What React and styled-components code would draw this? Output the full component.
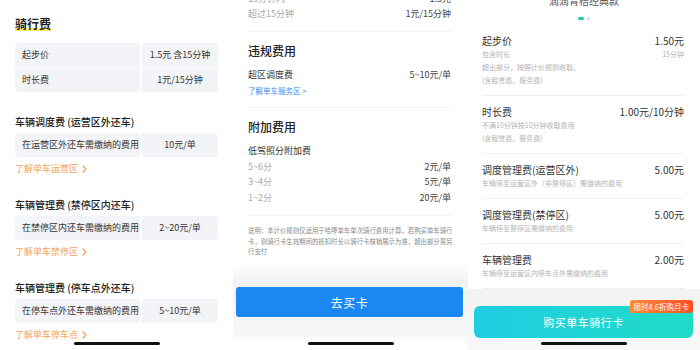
import React from "react";
import styled, { createGlobalStyle } from "styled-components";

const Global = createGlobalStyle`
  html, body { margin: 0; padding: 0; background: #fff; }
  body { font-family: "Noto Sans CJK SC", "Noto Sans", sans-serif; }
  * { box-sizing: border-box; }
`;

const Screen = styled.div`
  display: flex;
  width: 700px;
  height: 350px;
  overflow: hidden;
  background: #fff;
`;

const Panel = styled.div`
  position: relative;
  width: ${(p) => p.$w}px;
  flex: none;
  height: 350px;
  overflow: hidden;
  display: flex;
  flex-direction: column;
`;

const HomeBar = styled.div`
  position: absolute;
  left: 50%;
  bottom: 5px;
  width: 86px;
  height: 3px;
  margin-left: -43px;
  border-radius: 2px;
  background: #111;
`;

/* ---------- left panel ---------- */
const LeftBody = styled.div`
  padding: 0 15px;
`;

const MainTitle = styled.div`
  margin: 13px 0 10px;
  line-height: 18px;
  span {
    display: inline-block;
    font-size: 12px;
    font-weight: 700;
    color: #1f1f1f;
    background: linear-gradient(
      to bottom,
      transparent 13px,
      #fde862 13px,
      #fde862 16px,
      transparent 16px
    );
  }
`;

const FeeTable = styled.div`
  display: grid;
  grid-template-columns: 125px 1fr;
  gap: 1px 2px;
  border-radius: 4px;
  overflow: hidden;
`;

const Cell = styled.div`
  height: 24px;
  line-height: 24px;
  background: #f3f4f8;
  font-size: 9px;
  color: #333;
  padding-left: ${(p) => (p.$center ? 0 : 7)}px;
  text-align: ${(p) => (p.$center ? "center" : "left")};
  white-space: nowrap;
`;

const LeftSection = styled.div`
  margin-top: 23px;
`;

const SectionHead = styled.div`
  font-size: 10px;
  font-weight: 500;
  line-height: 14px;
  color: #222;
  margin-bottom: 4px;
  white-space: nowrap;
`;

const OrangeLink = styled.div`
  margin-top: 6px;
  display: flex;
  align-items: center;
  gap: 4px;
  font-size: 9px;
  line-height: 12px;
  color: #f5a25c;
`;

const Chevron = () => (
  <svg width="5" height="8" viewBox="0 0 5 8">
    <path d="M1 1l3 3-3 3" fill="none" stroke="#f5a25c" strokeWidth="1.4" strokeLinecap="round" strokeLinejoin="round" />
  </svg>
);

/* ---------- middle panel ---------- */
const MidBody = styled.div`
  padding: 0 17px 0 15px;
  margin-top: -9px;
`;

const MidSection = styled.div`
  padding: ${(p) => (p.$first ? "0 0 10px" : "11px 0 10px")};
  border-bottom: 1px solid #f1f1f1;
`;

const MidTitle = styled.div`
  font-size: 12px;
  font-weight: 500;
  line-height: 16px;
  color: #222;
  margin-bottom: 8px;
`;

const MidRow = styled.div`
  display: flex;
  justify-content: space-between;
  font-size: 9px;
  line-height: ${(p) => (p.$tall ? 15.5 : 15)}px;
  color: #444;
  span:first-child {
    color: ${(p) => (p.$muted ? "#a9a9a9" : "#333")};
  }
`;

const BlueLink = styled.div`
  margin-top: 3px;
  font-size: 7.5px;
  line-height: 12px;
  color: #3a8ef0;
`;

const Note = styled.div`
  padding-top: 10px;
  font-size: 6.4px;
  line-height: 10.5px;
  color: #8a8a8a;
  white-space: nowrap;
`;

const MidFooter = styled.div`
  margin-top: auto;
  height: 88px;
  padding: 25px 5px 0 3px;
  background: linear-gradient(
    to bottom,
    rgba(244, 244, 246, 0) 0,
    #f3f3f5 18px,
    #f6f6f8 72px,
    #ffffff 80px
  );
`;

const BlueButton = styled.div`
  height: 30px;
  border-radius: 3px;
  background: #1a88f3;
  color: #fff;
  font-size: 12px;
  display: flex;
  align-items: center;
  justify-content: center;
  letter-spacing: 0.5px;
`;

/* ---------- right panel ---------- */
const CardName = styled.div`
  margin-top: -6px;
  text-align: center;
  font-size: 10px;
  line-height: 14px;
  color: #555;
`;

const Dots = styled.div`
  display: flex;
  justify-content: center;
  align-items: center;
  gap: 3px;
  margin-top: 9px;
`;

const Dot = styled.div`
  width: ${(p) => (p.$active ? 6 : 3)}px;
  height: 3px;
  border-radius: 2px;
  background: ${(p) => (p.$active ? "#19cdb6" : "#dcdcdc")};
`;

const ItemList = styled.div`
  margin-top: 5px;
  padding: 0 16px 0 14px;
`;

const Item = styled.div`
  padding: 9px 0 8px;
  border-bottom: 1px solid #f0f0f0;
`;

const ItemHead = styled.div`
  display: flex;
  justify-content: space-between;
  font-size: 10px;
  line-height: 14px;
  color: #333;
`;

const SubRow = styled.div`
  display: flex;
  justify-content: space-between;
  font-size: 7px;
  line-height: 13px;
  color: #b3b3b3;
`;

const RightFooter = styled.div`
  margin-top: auto;
  height: 61px;
  padding: 17px 7px 0 6px;
  background: linear-gradient(to bottom, #f3f3f3 0, #f7f7f7 100%);
`;

const TealButton = styled.div`
  position: relative;
  height: 32px;
  border-radius: 6px;
  background: linear-gradient(90deg, #1fcde3 0%, #1fdcc6 100%);
  color: #fff;
  font-size: 11px;
  display: flex;
  align-items: center;
  justify-content: center;
  letter-spacing: 0.5px;
`;

const Badge = styled.div`
  position: absolute;
  top: -6px;
  right: 0;
  height: 13px;
  line-height: 13px;
  padding: 0 4px;
  border-radius: 3px 3px 3px 0;
  background: linear-gradient(90deg, #ff8a3a, #ff4e20);
  color: #fff;
  font-size: 7.5px;
  letter-spacing: 0;
  white-space: nowrap;
`;

const leftSections = [
  { head: "车辆调度费 (运营区外还车)", desc: "在运营区外还车需缴纳的费用", value: "10元/单", link: "了解单车运营区" },
  { head: "车辆管理费 (禁停区内还车)", desc: "在禁停区内还车需缴纳的费用", value: "2~20元/单", link: "了解单车禁停区" },
  { head: "车辆管理费 (停车点外还车)", desc: "在停车点外还车需缴纳的费用", value: "5~10元/单", link: "了解单车停车点" },
];

const rightItems = [
  {
    head: ["时长费", "1.00元/10分钟"],
    subs: [["不满10分钟按10分钟收取费用"], ["(含租赁费、服务费)"]],
  },
  { head: ["调度管理费(运营区外)", "5.00元"], subs: [["车辆停至运营区外（非禁停区）需缴纳的费用"]] },
  { head: ["调度管理费(禁停区)", "5.00元"], subs: [["车辆停至禁停区需缴纳的费用"]] },
  { head: ["车辆管理费", "2.00元"], subs: [["车辆停至运营区内停车点外需缴纳的费用"]] },
];

export default function App() {
  return (
    <>
      <Global />
      <Screen>
        <Panel $w={233}>
          <LeftBody>
            <MainTitle>
              <span>骑行费</span>
            </MainTitle>
            <FeeTable>
              <Cell>起步价</Cell>
              <Cell $center>1.5元 含15分钟</Cell>
              <Cell>时长费</Cell>
              <Cell $center>1元/15分钟</Cell>
            </FeeTable>
            {leftSections.map((s) => (
              <LeftSection key={s.head}>
                <SectionHead>{s.head}</SectionHead>
                <FeeTable>
                  <Cell>{s.desc}</Cell>
                  <Cell $center>{s.value}</Cell>
                </FeeTable>
                <OrangeLink>
                  {s.link}
                  <Chevron />
                </OrangeLink>
              </LeftSection>
            ))}
          </LeftBody>
          <HomeBar />
        </Panel>

        <Panel $w={235}>
          <MidBody>
            <MidSection $first>
              <MidRow $muted>
                <span>15分钟内</span>
                <span>1.5元</span>
              </MidRow>
              <MidRow $muted>
                <span>超过15分钟</span>
                <span>1元/15分钟</span>
              </MidRow>
            </MidSection>
            <MidSection>
              <MidTitle>违规费用</MidTitle>
              <MidRow>
                <span>超区调度费</span>
                <span>5~10元/单</span>
              </MidRow>
              <BlueLink>了解单车服务区 &gt;</BlueLink>
            </MidSection>
            <MidSection>
              <MidTitle>附加费用</MidTitle>
              <MidRow $tall>
                <span>低驾照分附加费</span>
              </MidRow>
              <MidRow $tall $muted>
                <span>5~6分</span>
                <span>2元/单</span>
              </MidRow>
              <MidRow $tall $muted>
                <span>3~4分</span>
                <span>5元/单</span>
              </MidRow>
              <MidRow $tall $muted>
                <span>1~2分</span>
                <span>20元/单</span>
              </MidRow>
            </MidSection>
            <Note>
              说明：本计价规则仅适用于哈啰单车单次骑行费用计算，若购买单车骑行
              <br />
              卡，则骑行卡生效期间的抵扣时长以骑行卡核销展示为准，超出部分需另
              <br />
              行支付
            </Note>
          </MidBody>
          <MidFooter>
            <BlueButton>去买卡</BlueButton>
          </MidFooter>
          <HomeBar />
        </Panel>

        <Panel $w={232}>
          <CardName>滴滴青桔经典款</CardName>
          <Dots>
            <Dot $active />
            <Dot />
          </Dots>
          <ItemList>
            <Item>
              <ItemHead>
                <span>起步价</span>
                <span>1.50元</span>
              </ItemHead>
              <SubRow>
                <span>包含时长</span>
                <span>15分钟</span>
              </SubRow>
              <SubRow>
                <span>超出部分，按照计价规则收取。</span>
              </SubRow>
              <SubRow>
                <span>(含租赁费、服务费)</span>
              </SubRow>
            </Item>
            {rightItems.map((it) => (
              <Item key={it.head[0]}>
                <ItemHead>
                  <span>{it.head[0]}</span>
                  <span>{it.head[1]}</span>
                </ItemHead>
                {it.subs.map((s) => (
                  <SubRow key={s[0]}>
                    <span>{s[0]}</span>
                  </SubRow>
                ))}
              </Item>
            ))}
          </ItemList>
          <RightFooter>
            <TealButton>
              购买单车骑行卡
              <Badge>限时4.6折购月卡</Badge>
            </TealButton>
          </RightFooter>
          <HomeBar />
        </Panel>
      </Screen>
    </>
  );
}
